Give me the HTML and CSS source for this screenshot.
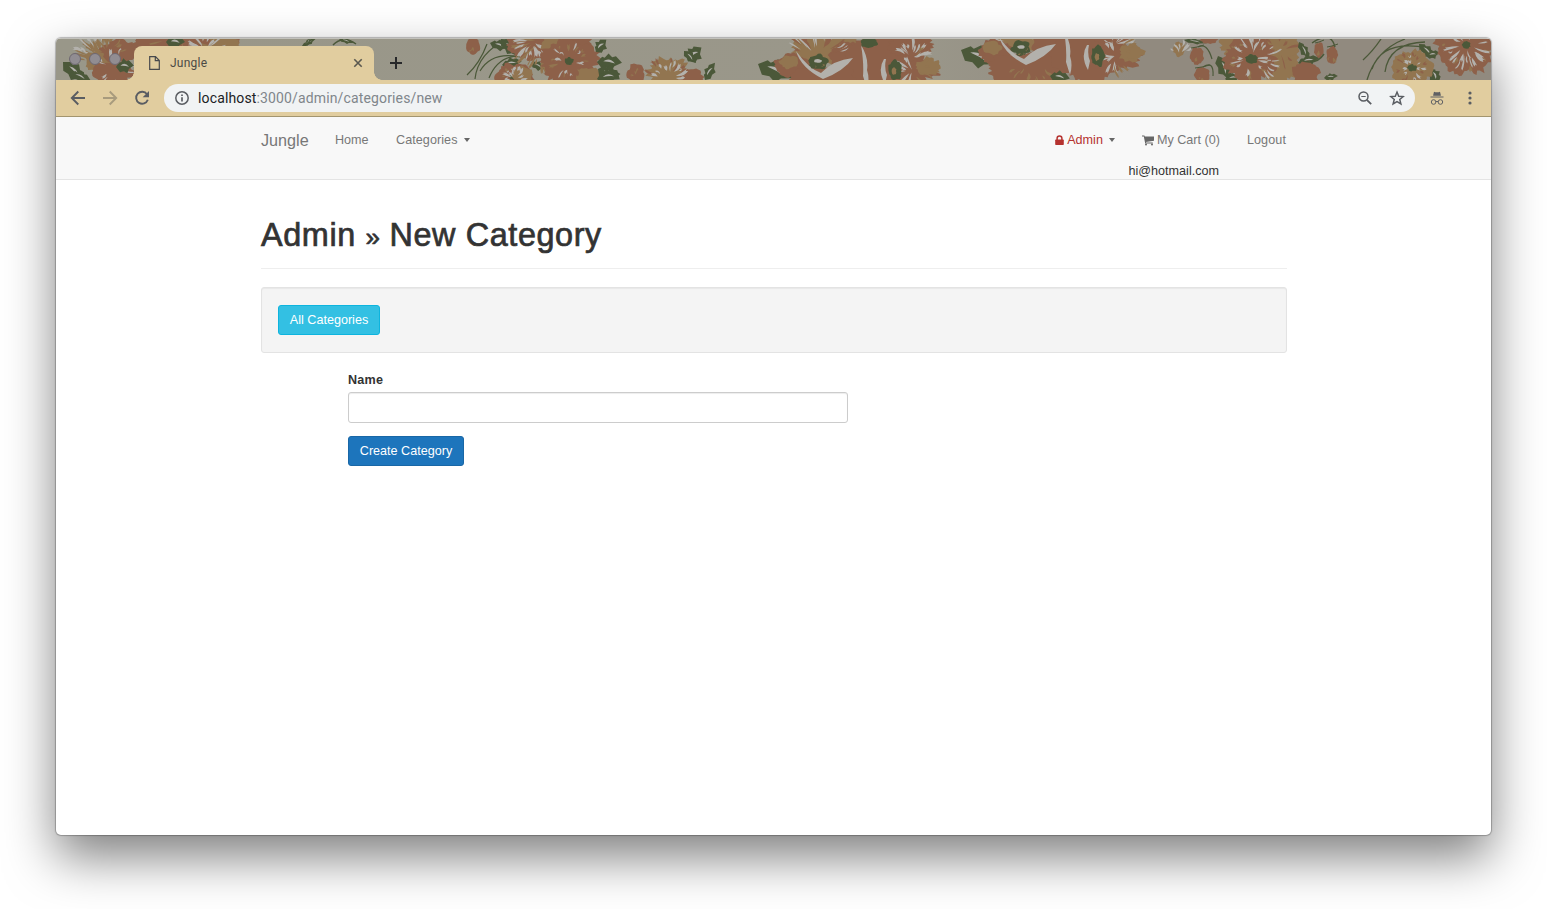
FILE: index.html
```html
<!DOCTYPE html>
<html lang="en">
<head>
<meta charset="utf-8">
<title>Jungle</title>
<link rel="stylesheet" href="styles.css">
</head>
<body>
<div class="window">
  <header class="tabstrip">
    <svg class="floral" viewBox="56 39 1435 41" preserveAspectRatio="none" aria-hidden="true"></svg>
    <div class="lights"><i></i><i></i><i></i></div>
    <div class="tab">
      <svg class="doc" viewBox="0 0 11 14"><path d="M.7.7h5.800L10.300 4.500v8.800H.7zM6.300 1v3.700h4" fill="none" stroke="#47494c" stroke-width="1.200"/></svg>
      <span class="tab-title">Jungle</span>
      <svg class="close" viewBox="0 0 10 10"><path d="M1.300 1.300l7.400 7.400M8.700 1.300L1.300 8.700" stroke="#5a584f" stroke-width="1.600"/></svg>
    </div>
    <svg class="plus" viewBox="0 0 12 12"><path d="M6 0v12M0 6h12" stroke="#27282a" stroke-width="2"/></svg>
  </header>
  <div class="toolbar">
    <svg class="nav-icon" viewBox="0 0 16 16"><path d="M15 8H2M8.300 1.500L1.800 8l6.500 6.500" fill="none" stroke="#5a5d62" stroke-width="1.900"/></svg>
    <svg class="nav-icon" viewBox="0 0 16 16"><path d="M1 8h13M7.700 1.500L14.200 8l-6.500 6.500" fill="none" stroke="#a89b7d" stroke-width="1.900"/></svg>
    <svg class="nav-icon" viewBox="0 0 16 16"><path d="M13 4.200A6 6 0 1 0 13.800 9.800" fill="none" stroke="#5a5d62" stroke-width="1.900"/><path d="M15 1v6.300H8.700z" fill="#5a5d62"/></svg>
    <div class="omnibox">
      <svg class="info" viewBox="0 0 14 14"><circle cx="7" cy="7" r="6.200" fill="none" stroke="#5a5d62" stroke-width="1.500"/><path d="M7 6.200v4.300M7 3.400v1.500" stroke="#5a5d62" stroke-width="1.700"/></svg>
      <span class="url"><b>localhost</b>:3000/admin/categories/new</span>
      <svg class="lens" viewBox="0 0 14 14"><circle cx="5.500" cy="5.500" r="4.500" fill="none" stroke="#5a5d62" stroke-width="1.500"/><path d="M3.300 5.500h4.400" stroke="#5a5d62" stroke-width="1.100"/><path d="M8.800 8.800l4.400 4.400" stroke="#5a5d62" stroke-width="1.800"/></svg>
      <svg class="star" viewBox="0 0 14 14"><path d="M7 1.800l1.500 3.600 4 .3-3.100 2.600 1 3.800L7 10.100l-3.400 2 1-3.800-3.100-2.600 4-.3z" fill="none" stroke="#5a5d62" stroke-width="1.300"/></svg>
    </div>
    <svg class="incognito" viewBox="0 0 14 14"><path d="M4 .8l1.400.5h3.200L10 .8l.8 3.200H3.200zM.5 5.400h13v1.200H.5z" fill="#5f6064"/><path d="M3.200 4.500h7.600" stroke="#5f6064" stroke-width=".8"/><circle cx="3.600" cy="11" r="2.300" fill="none" stroke="#5f6064"/><circle cx="10.400" cy="11" r="2.300" fill="none" stroke="#5f6064"/><path d="M5.900 10.700q1.100-.7 2.200 0" fill="none" stroke="#5f6064"/></svg>
    <svg class="dots" viewBox="0 0 4 14"><circle cx="2" cy="2" r="1.600" fill="#5a5d62"/><circle cx="2" cy="7" r="1.600" fill="#5a5d62"/><circle cx="2" cy="12" r="1.600" fill="#5a5d62"/></svg>
  </div>
  <nav class="navbar">
    <div class="container nav-row">
      <a class="brand">Jungle</a>
      <a class="link home">Home</a>
      <a class="link cats">Categories<i class="caret"></i></a>
      <div class="right">
        <div class="right-row">
          <a class="link admin"><svg class="lock" viewBox="0 0 9 11"><path d="M2.100 5V3.300a2.400 2.400 0 0 1 4.800 0V5" fill="none" stroke="#b5322f" stroke-width="1.500"/><rect x=".2" y="4.500" width="8.600" height="5.500" rx=".7" fill="#b5322f"/></svg><span>Admin</span><i class="caret"></i></a>
          <a class="link cart"><svg class="trolley" viewBox="0 0 12 11"><path d="M0 .4h2.400l.4 1.200H12v4.200L3.900 6.900l.2.700h6.700v1H3.200L1.800 1.400H0z" fill="#666"/><circle cx="4" cy="9.500" r="1" fill="#666"/><circle cx="10" cy="9.500" r="1" fill="#666"/></svg><span>My Cart (0)</span></a>
          <a class="link logout">Logout</a>
        </div>
        <span class="email">hi@hotmail.com</span>
      </div>
    </div>
  </nav>
  <main class="container">
    <h1>Admin <span class="sep">»</span> New Category</h1>
    <div class="well"><a class="btn info-btn"><span>All Categories</span></a></div>
    <form class="form">
      <label for="name">Name</label>
      <input id="name" type="text">
      <button type="button" class="btn primary-btn"><span>Create Category</span></button>
    </form>
  </main>
</div>
<script src="floral.js"></script>
</body>
</html>
```

FILE: styles.css
```css
* { box-sizing: border-box; }
body { margin: 0; padding: 38px 56px 0; width: 1547px; height: 909px; overflow: hidden; background: #fff; font: 12.6px/18px "Liberation Sans", Arial, sans-serif; color: #333; }
svg { display: block; flex: none; }
.window { width: 1435px; height: 797px; background: #fff; border-radius: 5px; box-shadow: 0 0 1px 1px rgba(0,0,0,.25), 0 22px 50px rgba(0,0,0,.5); overflow: hidden; }
.tabstrip { position: relative; display: flex; height: 42px; padding-top: 7px; background: linear-gradient(90deg, #999789, #9a978a 60%, #918a7f 75%); border-top: 1px solid #c2c1bb; }
.floral { position: absolute; left: 0; top: 0; width: 1435px; height: 41px; }
.lights { position: relative; display: flex; gap: 8px; padding: 7px 0 0 13px; width: 78px; }
.lights i { width: 12px; height: 12px; border-radius: 50%; background: #918d92; border: 1px solid #6e6871; flex: none; }
.tab { position: relative; display: flex; align-items: center; width: 240px; height: 34px; padding: 0 11px 0 15px; background: #e1cd9f; border-radius: 8px 8px 0 0; }
.tab::before, .tab::after { content: ""; position: absolute; bottom: 0; width: 8px; height: 8px; }
.tab::before { left: -8px; background: radial-gradient(circle at 0 0, transparent 7.5px, #e1cd9f 8px); }
.tab::after { right: -8px; background: radial-gradient(circle at 100% 0, transparent 7.5px, #e1cd9f 8px); }
.doc { width: 11px; height: 14px; }
.tab-title { font: 12px/16px Roboto, sans-serif; letter-spacing: .25px; color: #4b4a45; margin-left: 10px; flex: 1; }
.close { width: 10px; height: 10px; }
.plus { position: relative; width: 12px; height: 12px; margin: 11px 0 0 16px; }
.toolbar { display: flex; align-items: center; height: 37px; padding-left: 14px; background: #e1cd9f; border-bottom: 1px solid #a3956f; }
.nav-icon { width: 16px; height: 16px; margin-right: 16px; }
.omnibox { display: flex; align-items: center; width: 1251px; height: 28px; margin-left: -2px; padding: 0 11px; border-radius: 14px; background: #f1f3f4; }
.info { width: 14px; height: 14px; }
.url { font: 14px/20px Roboto, sans-serif; letter-spacing: .14px; color: #80868b; margin-left: 9px; flex: 1; }
.url b { font-weight: 400; color: #202124; }
.lens { width: 14px; height: 14px; margin-right: 17px; }
.star { width: 16px; height: 16px; margin-right: -1px; }
.incognito { width: 14px; height: 14px; margin-left: 15px; }
.dots { width: 4px; height: 14px; margin-left: 23.500px; }
.navbar { height: 63px; background: #f8f8f8; border-bottom: 1px solid #e4e4e4; }
.container { width: 1026px; margin-left: 205px; }
.nav-row { display: flex; align-items: flex-start; }
.brand { font-size: 16.200px; line-height: 18px; padding-top: 14px; color: #777; width: 74px; }
.link { display: flex; align-items: center; padding-top: 14px; color: #777; white-space: nowrap; }
.home { width: 61px; }
.cats { letter-spacing: .06px; }
.caret { border: 3.500px solid transparent; border-top: 4px solid #666; border-bottom: 0; margin-left: 6px; }
.right { margin-left: auto; margin-right: 1px; }
.right-row { display: flex; }
.admin { color: #b5322f; }
.lock { width: 9px; height: 11px; margin-right: 3px; }
.cart { margin-left: 27px; }
.trolley { width: 12px; height: 11px; margin-right: 3px; }
.logout { margin-left: 27px; letter-spacing: .1px; }
.email { display: block; margin: 13px 67px 0 0; text-align: right; color: #333; }
h1 { margin: 0; padding: 36px 0 0; height: 89px; border-bottom: 1px solid #eee; font-weight: 400; font-size: 32.400px; line-height: 38px; letter-spacing: .6px; -webkit-text-stroke: .7px #333; white-space: nowrap; }
.sep { font-size: 26px; line-height: 1; letter-spacing: 0; }
.well { height: 66px; margin-top: 18px; padding: 17px 16px; background: #f4f4f4; border: 1px solid #e3e3e3; border-radius: 3px; box-shadow: inset 0 1px 1px rgba(0,0,0,.05); }
.btn { display: flex; align-items: center; justify-content: center; height: 30px; padding: 0; border-radius: 3px; color: #fff; font: inherit; white-space: nowrap; }
.info-btn { width: 102px; background: #33c0e3; border: 1px solid #0db4de; }
.primary-btn { width: 116px; background: #1d75bc; border: 1px solid #1967a6; margin-top: 13px; }
.form { display: flex; flex-direction: column; align-items: flex-start; width: 500px; margin: 18px 0 0 87px; }
label { font-weight: 700; letter-spacing: .2px; margin-bottom: 3px; }
input { width: 500px; height: 31px; border: 1px solid #ccc; border-radius: 3px; background: #fff; box-shadow: inset 0 1px 1px rgba(0,0,0,.075); }
```

FILE: floral.js
```js
const svg = document.querySelector('.floral');
const RUST = '#8d6049', TAN = '#927550', PALE = '#b3b1ac', LEAF = '#4b5839';
let seed = 7;
function rnd() { seed = (seed * 16807) % 2147483647; return seed / 2147483647; }
function put(tag, attrs) {
  const e = document.createElementNS('http://www.w3.org/2000/svg', tag);
  for (const k in attrs) e.setAttribute(k, attrs[k]);
  svg.appendChild(e);
}
// Petal mass with a torn, lobed edge
function blob(x, y, rx, ry, fill, rough = 0.2) {
  const n = Math.round((rx + ry) * 1.1) + 8, ph = rnd() * 6;
  let p = '';
  for (let i = 0; i < n; i++) {
    const a = i / n * Math.PI * 2, k = 1.04 - rnd() * rough + Math.sin(a * 5 + ph) * 0.07;
    p += (x + Math.cos(a) * rx * k).toFixed(1) + ',' + (y + Math.sin(a) * ry * k).toFixed(1) + ' ';
  }
  put('polygon', { points: p, fill });
}
// Irregular brush marks set loosely around a centre
function rays(x, y, r1, r2, a1, a2, n, fill) {
  const count = Math.ceil(n * 0.72);
  for (let i = 0; i < count; i++) {
    const a = (a1 + (a2 - a1) * (i + rnd() * 1.3) / count) * Math.PI / 180;
    const s = r1 + rnd() * (r2 - r1) * 0.5, e = s + (r2 - s) * (0.35 + rnd() * 0.65);
    const w = 0.8 + rnd() * 1.7, m = (s + e) / 2, b = (rnd() - 0.5) * 7;
    const c = Math.cos(a), d = Math.sin(a);
    put('path', { d: `M${x + c * s} ${y + d * s}Q${x + c * m - d * (b + w)} ${y + d * m + c * (b + w)} ${x + c * e - d * w * .5} ${y + d * e + c * w * .5}L${x + c * (e - 2)} ${y + d * (e - 2)}L${x + c * e + d * w * .6} ${y + d * e - c * w * .6}Q${x + c * m - d * (b - w)} ${y + d * m + c * (b - w)} ${x + c * s} ${y + d * s}`, fill });
  }
}
function leaf(x, y, len, wid, deg) {
  const t = `translate(${x} ${y}) rotate(${deg})`, l = len, w = wid;
  put('path', { transform: t, fill: LEAF, d: `M0 0L${l * .2} ${-w * .6}L${l * .3} ${-w * .5}L${l * .45} ${-w}L${l * .6} ${-w * .6}L${l * .75} ${-w * .7}L${l} 0L${l * .7} ${w * .4}L${l * .6} ${w * .9}L${l * .4} ${w * .6}L${l * .2} ${w * .7}Z` });
  put('path', { transform: t, fill: PALE, d: `M${l * .25} ${-w * .1}Q${l * .5} ${-w * .6} ${l * .72} ${w * .1}Q${l * .5} ${-w * .1} ${l * .25} ${-w * .1}` });
}
function stem(d, width = 1) { put('path', { d, fill: 'none', stroke: LEAF, 'stroke-width': width }); }
function bud(x, y, rx, ry) { blob(x, y, rx, ry, RUST, .15); rays(x, y, 0, ry, 60, 130, 2, TAN); stem(`M${x - rx + 1} ${y - ry + 1}L${x} ${y - ry}L${x + rx} ${y - ry - 2}`, 1); }
function bloom(x, y, rx, ry, fill, alt) {
  blob(x, y, rx, ry, fill, .22);
  rays(x, y, Math.min(rx, ry) * .4, Math.min(rx, ry) * .95, 0, 360, 16, alt);
  rays(x, y, 4, Math.min(rx, ry) * .85, 0, 360, 13, PALE);
  blob(x, y, 5, 4, LEAF, .3);
}
// Wide double rose, repeated along the strip
function rose(x, y) {
  leaf(x - 60, y + 2, 38, 12, 22);
  blob(x + 7, y - 16, 37, 19, TAN);
  blob(x + 30, y - 5, 20, 16, RUST);
  rays(x, y - 2, 9, 38, 195, 340, 14, PALE);
  rays(x, y - 5, 10, 38, 190, 340, 14, RUST);
  blob(x - 26, y + 4, 18, 13, RUST);
  blob(x - 29, y, 10, 7, TAN);
  blob(x + 6, y + 21, 41, 18, RUST);
  rays(x + 12, y + 9, 14, 32, 30, 155, 13, TAN);
  blob(x + 68, y, 39, 36, RUST, .14);
  blob(x + 95, y + 9, 28, 13, RUST, .35);
  blob(x + 93, y - 18, 24, 16, RUST, .3);
  blob(x + 110, y + 5, 14, 10, TAN, .3);
  rays(x + 94, y - 4, 1, 22, 195, 355, 18, PALE);
  rays(x + 94, y + 8, 0, 20, 70, 270, 12, PALE);
  rays(x + 89, y + 5, 12, 30, -70, 80, 10, TAN);
  put('path', { d: `M${x - 22} ${y - 11}Q${x - 9} ${y + 7} ${x + 3} ${y + 11}Q${x + 15} ${y - 2} ${x + 35} ${y - 4}Q${x + 26} ${y + 9} ${x + 5} ${y + 17}Q${x - 17} ${y + 6} ${x - 22} ${y - 11}`, fill: PALE });
  put('path', { d: `M${x + 43} ${y - 17}q8 13 6 25q3 9 0 19l-4-13q1-13-2-31M${x + 66} ${y - 3}q-7 11 1 25l2-9q-3-7-1-16`, fill: PALE });
  blob(x, y, 10, 8, LEAF); blob(x, y - 1, 4, 2, PALE); rays(x, y, 4, 8, 10, 120, 3, TAN);
  blob(x + 51, y - 19, 9, 5, LEAF);
  blob(x + 77, y + 8, 7, 11, LEAF); blob(x + 76, y + 9, 2.5, 4, TAN);
}
// Left cluster behind the tab
rays(105, 62, 6, 35, 185, 300, 26, TAN); rays(102, 59, 12, 32, 190, 290, 16, PALE);
blob(101, 61, 17, 12, TAN); blob(120, 51, 20, 12, RUST); blob(113, 72, 23, 12, RUST);
rays(114, 68, 6, 23, 0, 360, 12, PALE); rays(108, 53, 3, 20, 190, 350, 10, TAN);
leaf(63, 62, 30, 9, 42); leaf(70, 73, 22, 6, 20); leaf(116, 67, 18, 8, -5);
blob(160, 43, 31, 13, RUST); blob(207, 42, 36, 11, RUST); blob(224, 43, 16, 8, TAN); rays(180, 37, 4, 48, 0, 170, 18, TAN);
rays(205, 50, 3, 24, 190, 350, 12, PALE); leaf(166, 42, 19, 8, 0);
leaf(302, 46, 16, 3, -28); leaf(307, 46, 11, 2, -72); stem('M333 45Q343 35 356 44', 1.5); leaf(339, 39, 15, 3, 15);
// First bouquet
bud(473, 46, 7, 9); stem('M467 75Q480 63 487 44M475 79Q478 51 512 37M489 78Q500 51 530 57M480 71Q492 51 520 57', 1.2);
leaf(490, 43, 20, 6, 15); leaf(501, 39, 25, 7, 45); leaf(502, 65, 20, 6, -10); leaf(531, 63, 16, 5, 23);
blob(530, 44, 25, 16, RUST); rays(541, 41, 5, 34, 75, 205, 18, TAN); rays(532, 41, 4, 22, 20, 200, 22, PALE);
bloom(514, 76, 20, 13, RUST, TAN); blob(522, 76, 11, 11, TAN); rays(515, 79, 3, 16, 180, 360, 12, PALE);
blob(569, 45, 26, 18, RUST); blob(555, 45, 15, 12, TAN);
bloom(569, 61, 31, 24, RUST, TAN); blob(589, 76, 12, 9, TAN); leaf(596, 52, 16, 7, -50); leaf(597, 62, 25, 9, 2); leaf(598, 69, 24, 10, 25); leaf(597, 79, 24, 8, -12);
blob(636, 74, 9, 12, RUST); rays(636, 76, 1, 9, 180, 330, 4, TAN); blob(669, 71, 24, 15, TAN, .3); blob(691, 77, 13, 9, RUST);
rays(667, 79, 8, 25, 190, 350, 9, RUST); rays(669, 79, 6, 21, 190, 350, 14, PALE); leaf(688, 61, 19, 9, -45); leaf(684, 51, 17, 5, 45); leaf(705, 80, 20, 6, -60);
rose(818, 62); blob(1010, 68, 19, 12, TAN); rose(1021, 48);
leaf(1050, 76, 20, 7, 7);
// Small buds and right bouquet
blob(1179, 49, 6, 8, TAN); rays(1180, 54, 1, 16, 210, 330, 8, PALE); leaf(1184, 40, 23, 3, 8);
bud(1197, 56, 7, 9); bud(1202, 75, 8, 8); stem('M1198 47Q1207 42 1212 59M1203 67Q1214 60 1213 76', 1.2);
blob(1209, 40, 9, 4, RUST); leaf(1218, 56, 27, 8, 65); leaf(1225, 79, 17, 5, -8);
blob(1245, 45, 27, 14, TAN); blob(1278, 60, 22, 26, TAN); blob(1284, 44, 16, 16, TAN); bloom(1250, 59, 28, 26, RUST, TAN); rays(1256, 58, 8, 28, 200, 420, 22, PALE); rays(1280, 50, 4, 22, 0, 360, 10, RUST); blob(1252, 59, 6, 5, LEAF);
leaf(1299, 42, 20, 5, 60); leaf(1298, 63, 22, 6, -13); leaf(1298, 69, 19, 5, 12);
blob(1306, 73, 15, 12, RUST); bud(1319, 50, 5, 8); bud(1332, 55, 6, 9); stem('M1312 43Q1331 30 1335 47M1300 60Q1316 66 1324 54', 1.5); leaf(1324, 78, 14, 4, -8);
stem('M1363 60Q1373 51 1381 39M1367 80Q1376 50 1405 39M1385 72Q1389 43 1425 42M1372 69Q1382 39 1428 48', 1.3);
leaf(1419, 44, 22, 6, 42); leaf(1426, 56, 14, 5, -13); leaf(1430, 69, 16, 7, 57);
bloom(1412, 68, 22, 19, TAN, RUST); bloom(1466, 45, 31, 32, RUST, TAN); rays(1466, 45, 6, 27, 15, 170, 16, PALE);
```
